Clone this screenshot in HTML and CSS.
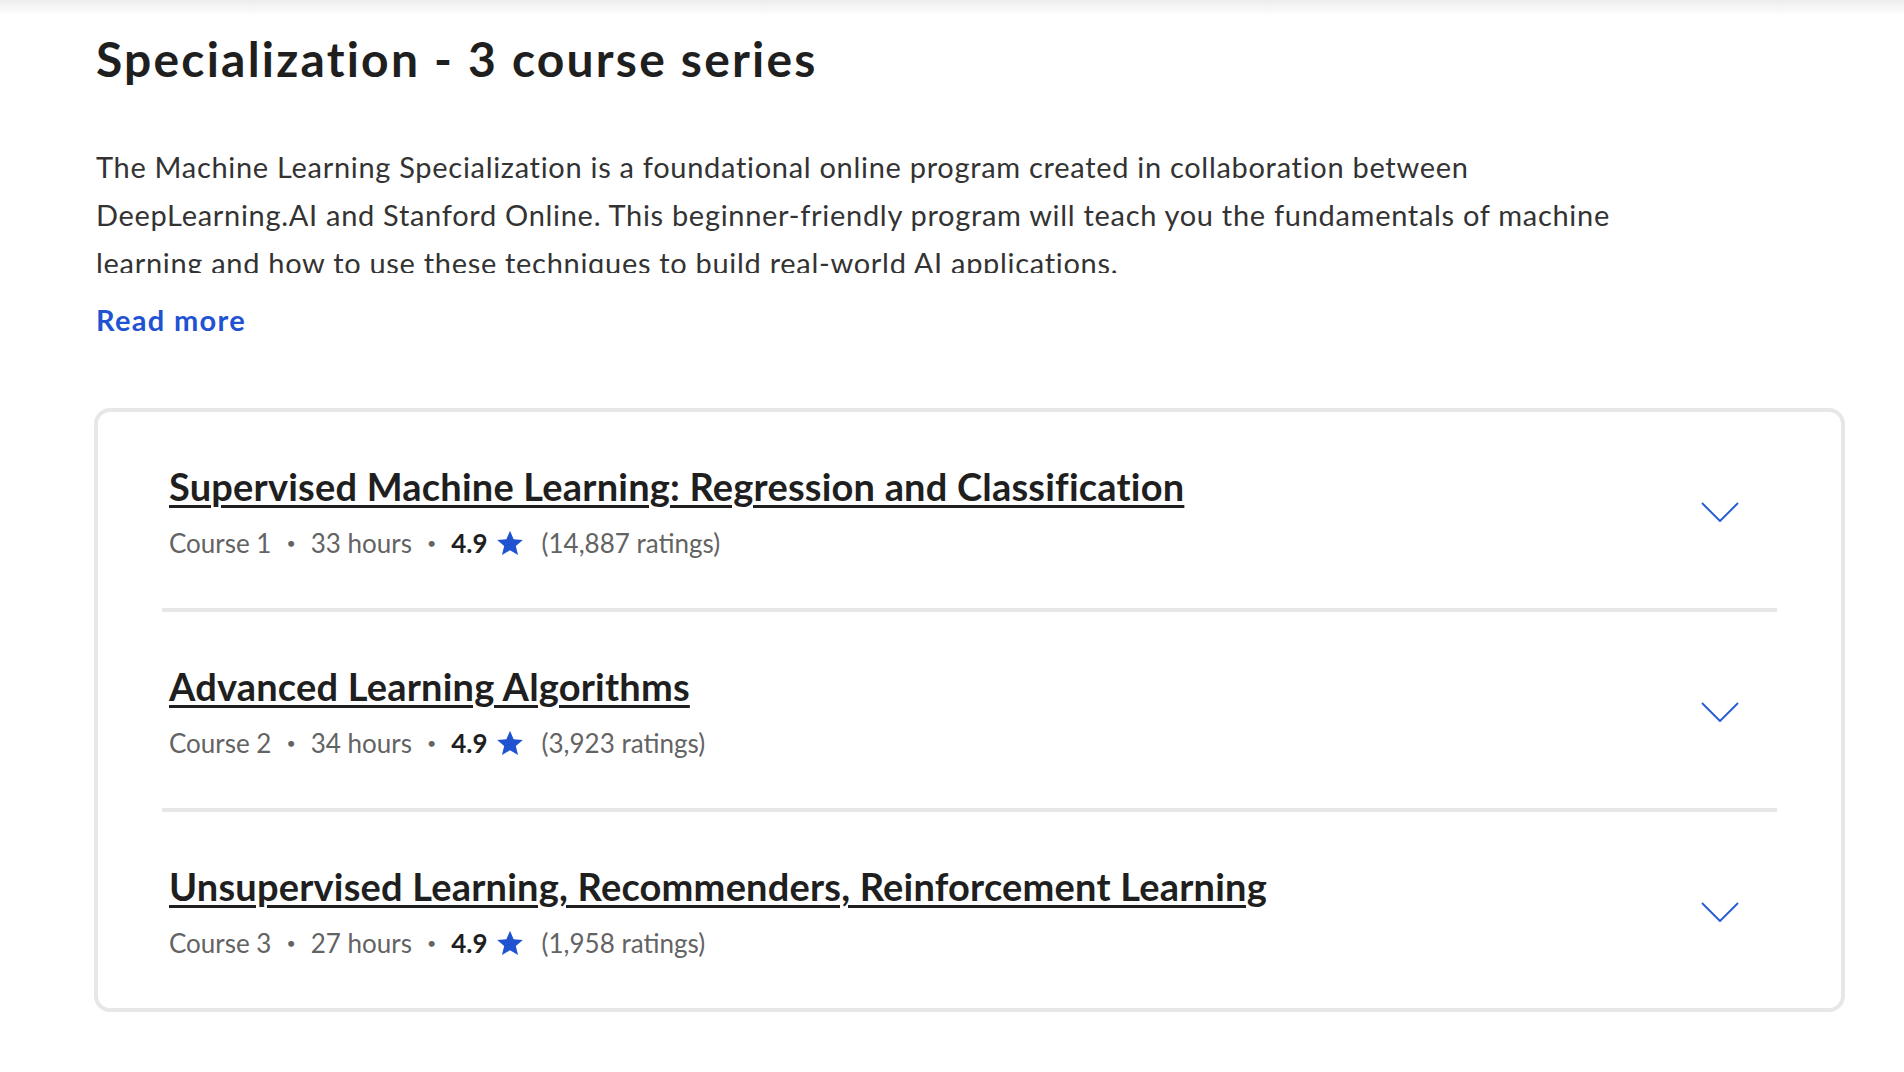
FILE: index.html
```html
<!DOCTYPE html>
<html lang="en">
  <head>
    <meta charset="UTF-8" />
    <meta name="viewport" content="width=device-width, initial-scale=1.0" />
    <title>Specialization - 3 course series</title>
    <link rel="stylesheet" href="styles.css">
  </head>
  <body>
    <div class="top-shade"></div>
    <main class="container">
      <h2 class="series-title">Specialization - 3 course series</h2>
      <div class="about">
        <p>
          The Machine Learning Specialization is a foundational online program created in collaboration between
          DeepLearning.AI and Stanford Online. This beginner-friendly program will teach you the fundamentals of machine
          learning and how to use these techniques to build real-world AI applications.
        </p>
      </div>
      <a class="read-more" href="#">Read more</a>

      <ul class="course-list">
        <li class="course">
          <div class="course-info">
            <a class="course-name" href="#">Supervised Machine Learning: Regression and Classification</a>
            <div class="course-meta">
              <span>Course 1</span><span class="dot">•</span><span>33 hours</span><span class="dot">•</span>
              <span class="rating">4.9</span>
              <svg class="star" viewBox="0 0 24 24"><path d="M12 1.5l3.1 7.3 7.9.6-6 5.2 1.9 7.7L12 18.2l-6.9 4.1 1.9-7.7-6-5.2 7.9-.6z"/></svg>
              <span class="count">(14,887 ratings)</span>
            </div>
          </div>
          <button class="toggle"><svg viewBox="0 0 38 20"><path d="M1 1l18 18L37 1"/></svg></button>
        </li>
        <li class="course">
          <div class="course-info">
            <a class="course-name" href="#">Advanced Learning Algorithms</a>
            <div class="course-meta">
              <span>Course 2</span><span class="dot">•</span><span>34 hours</span><span class="dot">•</span>
              <span class="rating">4.9</span>
              <svg class="star" viewBox="0 0 24 24"><path d="M12 1.5l3.1 7.3 7.9.6-6 5.2 1.9 7.7L12 18.2l-6.9 4.1 1.9-7.7-6-5.2 7.9-.6z"/></svg>
              <span class="count">(3,923 ratings)</span>
            </div>
          </div>
          <button class="toggle"><svg viewBox="0 0 38 20"><path d="M1 1l18 18L37 1"/></svg></button>
        </li>
        <li class="course">
          <div class="course-info">
            <a class="course-name" href="#">Unsupervised Learning, Recommenders, Reinforcement Learning</a>
            <div class="course-meta">
              <span>Course 3</span><span class="dot">•</span><span>27 hours</span><span class="dot">•</span>
              <span class="rating">4.9</span>
              <svg class="star" viewBox="0 0 24 24"><path d="M12 1.5l3.1 7.3 7.9.6-6 5.2 1.9 7.7L12 18.2l-6.9 4.1 1.9-7.7-6-5.2 7.9-.6z"/></svg>
              <span class="count">(1,958 ratings)</span>
            </div>
          </div>
          <button class="toggle"><svg viewBox="0 0 38 20"><path d="M1 1l18 18L37 1"/></svg></button>
        </li>
      </ul>
    </main>
  </body>
</html>
```

FILE: styles.css
```css
body {
  margin: 0;
  background: #fff;
  color: #1f1f1f;
  font-family: Lato, "Liberation Sans", sans-serif;
}
.top-shade {
  height: 16px;
  background: linear-gradient(#ededed, #fff);
}
.container {
  padding: 16px 59px 0 94px;
}

/* Heading */
.series-title {
  margin: 0 0 57px 2px;
  font-size: 48px;
  line-height: 54px;
  letter-spacing: 2.2px;
  font-weight: 700;
  color: #1f1f1f;
}
.about {
  height: 130px;
  overflow: hidden;
  margin-left: 2px;
}
.about p {
  margin: 0;
  max-width: 1530px;
  font-size: 29px;
  line-height: 48px;
  letter-spacing: 0.7px;
  color: #333;
}
.read-more {
  display: inline-block;
  margin: 29px 0 70px 2px;
  font-size: 29px;
  line-height: 36px;
  letter-spacing: 1.3px;
  font-weight: 700;
  color: #1f53d1;
  text-decoration: none;
}

/* Course list */
.course-list {
  margin: 0;
  padding: 0;
  list-style: none;
  border: 4px solid #e6e7e9;
  border-radius: 16px;
}
.course {
  display: flex;
  align-items: center;
  margin: 0 64px;
  padding: 52px 0 49px 7px;
  border-bottom: 4px solid #e6e7e9;
}
.course:last-child {
  border-bottom: 0;
}
.course-info {
  flex: 1;
}
.course-name {
  display: block;
  font-size: 38px;
  line-height: 44px;
  letter-spacing: 0.2px;
  font-weight: 700;
  color: #1f1f1f;
  text-decoration: underline;
  text-decoration-thickness: 3px;
  text-underline-offset: 4px;
  margin-bottom: 19px;
}
.course-meta {
  display: flex;
  align-items: center;
  font-size: 26px;
  line-height: 32px;
  color: #636363;
}
.dot {
  font-size: 16px;
  padding: 0 15px;
}
.rating {
  font-weight: 700;
  color: #1f1f1f;
}
.star {
  width: 28px;
  height: 28px;
  margin: 0 18px 0 8px;
  fill: #1f53d1;
}
.toggle {
  background: none;
  border: 0;
  padding: 0;
  margin-right: 38px;
  cursor: pointer;
}
.toggle svg {
  display: block;
  width: 38px;
  height: 20px;
  fill: none;
  stroke: #2b5fd6;
  stroke-width: 2;
}
```
